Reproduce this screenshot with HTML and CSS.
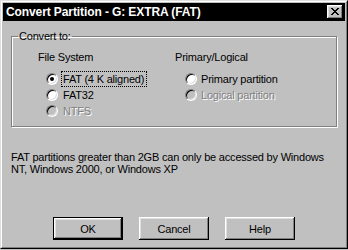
FILE: index.html
```html
<!DOCTYPE html>
<html lang="en">
<head>
    <meta charset="UTF-8">
    <title>Convert Partition - G: EXTRA (FAT)</title>
    <link rel="stylesheet" href="styles.css">
</head>
<body>
    <div class="window">
        <div class="frame">
            <header class="titlebar">
                <span class="title">Convert Partition - G: EXTRA (FAT)</span>
                <span class="close-btn">
                    <svg width="8" height="7" viewBox="0 0 8 7" shape-rendering="crispEdges">
                        <path d="M0 0h2v1h-2z M6 0h2v1h-2z M1 1h2v1h-2z M5 1h2v1h-2z M2 2h4v1h-4z M3 3h2v1h-2z M2 4h4v1h-4z M1 5h2v1h-2z M5 5h2v1h-2z M0 6h2v1h-2z M6 6h2v1h-2z" fill="#000"/>
                    </svg>
                </span>
            </header>

            <main class="dialog-body">
                <fieldset class="group">
                    <legend class="group-label">Convert to:</legend>
                    <div class="columns">
                        <div class="col col-fs">
                            <div class="col-title">File System</div>
                            <div class="radio-row">
                                <span class="radio checked"></span>
                                <span class="radio-text focused">FAT (4 K aligned)</span>
                            </div>
                            <div class="radio-row">
                                <span class="radio"></span>
                                <span class="radio-text">FAT32</span>
                            </div>
                            <div class="radio-row disabled">
                                <span class="radio"></span>
                                <span class="radio-text">NTFS</span>
                            </div>
                        </div>
                        <div class="col col-pl">
                            <div class="col-title">Primary/Logical</div>
                            <div class="radio-row">
                                <span class="radio"></span>
                                <span class="radio-text">Primary partition</span>
                            </div>
                            <div class="radio-row disabled">
                                <span class="radio"></span>
                                <span class="radio-text">Logical partition</span>
                            </div>
                        </div>
                    </div>
                </fieldset>

                <p class="note">FAT partitions greater than 2GB can only be accessed by Windows<br>NT, Windows 2000, or Windows XP</p>

                <div class="buttons">
                    <span class="btn default">OK</span>
                    <span class="btn">Cancel</span>
                    <span class="btn">Help</span>
                </div>
            </main>
        </div>
    </div>
</body>
</html>
```

FILE: styles.css
```css
:root {
    --face: #c0c0c0;
    --light: #dfdfdf;
    --shadow: #808080;
    --dark: #000;
}

body {
    margin: 0;
    background: var(--face);
    font-family: 'Liberation Sans', Arial, sans-serif;
    font-size: 11px;
    letter-spacing: -0.2px;
    color: #000;
}

.window {
    width: 348px;
    height: 249px;
    box-sizing: border-box;
    border: 1px solid;
    border-color: var(--light) var(--dark) var(--dark) var(--light);
    background: var(--face);
}

.frame {
    height: 100%;
    box-sizing: border-box;
    border: 1px solid;
    border-color: #fff var(--shadow) var(--shadow) #fff;
    padding: 1px;
    display: flex;
    flex-direction: column;
}

.titlebar {
    height: 18px;
    background: #000;
    display: flex;
    align-items: center;
    justify-content: space-between;
    padding: 0 2px 0 3px;
}

.title {
    color: #fff;
    font-weight: bold;
    font-size: 12px;
    letter-spacing: -0.1px;
    line-height: 18px;
}

.close-btn {
    width: 16px;
    height: 14px;
    background: var(--face);
    box-shadow: inset -1px -1px var(--dark), inset 1px 1px #fff,
                inset -2px -2px var(--shadow), inset 2px 2px var(--light);
    display: flex;
    align-items: center;
    justify-content: center;
}

.close-btn svg {
    display: block;
    margin: 0 0 1px 0;
}

.dialog-body {
    flex: 1;
    display: flex;
    flex-direction: column;
    padding: 0 8px 6px 8px;
}

.group {
    margin: 9px 0 0 0;
    padding: 8px 0 7px 0;
    border: 1px solid var(--shadow);
    box-shadow: inset 1px 1px 0 #fff, 1px 1px 0 #fff;
}

.group-label {
    margin-left: 6px;
    padding: 0 1px;
    line-height: 13px;
}

.columns {
    display: flex;
}

.col-title {
    line-height: 13px;
    margin-bottom: 7px;
}

.col-fs {
    width: 137px;
    padding-left: 26px;
}

.col-fs .radio-row {
    padding-left: 8px;
}

.col-pl .radio-row {
    padding-left: 10px;
}

.radio-row {
    height: 16px;
    display: flex;
    align-items: center;
}

.radio {
    position: relative;
    width: 12px;
    height: 12px;
    box-sizing: border-box;
    border-radius: 50%;
    border: 1px solid;
    border-color: var(--shadow) #fff #fff var(--shadow);
    box-shadow: inset 1px 1px var(--dark), inset -1px -1px var(--light);
    background: #fff;
    flex-shrink: 0;
}

.radio.checked::after {
    content: '';
    position: absolute;
    left: 3px;
    top: 3px;
    width: 4px;
    height: 4px;
    border-radius: 50%;
    background: #000;
}

.radio-text {
    margin-left: 4px;
    padding: 0 2px 0 1px;
    line-height: 14px;
}

.col-pl .radio-text {
    margin-left: 3px;
}

.focused {
    outline: 1px dotted #000;
}

.disabled .radio {
    background: var(--face);
}

.disabled .radio-text {
    color: var(--shadow);
    text-shadow: 1px 1px 0 #fff;
}

.note {
    margin: 24px 0 0 0;
    line-height: 12px;
}

.buttons {
    margin-top: auto;
    margin-left: 42px;
    display: flex;
    gap: 16px;
}

.btn {
    width: 70px;
    height: 23px;
    box-sizing: border-box;
    display: flex;
    align-items: center;
    justify-content: center;
    background: var(--face);
    box-shadow: inset -1px -1px var(--dark), inset 1px 1px #fff,
                inset -2px -2px var(--shadow), inset 2px 2px var(--light);
}

.btn.default {
    border: 1px solid #000;
    box-shadow: inset -1px -1px var(--dark), inset 1px 1px #fff,
                inset -2px -2px var(--shadow), inset 2px 2px var(--light);
}
```
